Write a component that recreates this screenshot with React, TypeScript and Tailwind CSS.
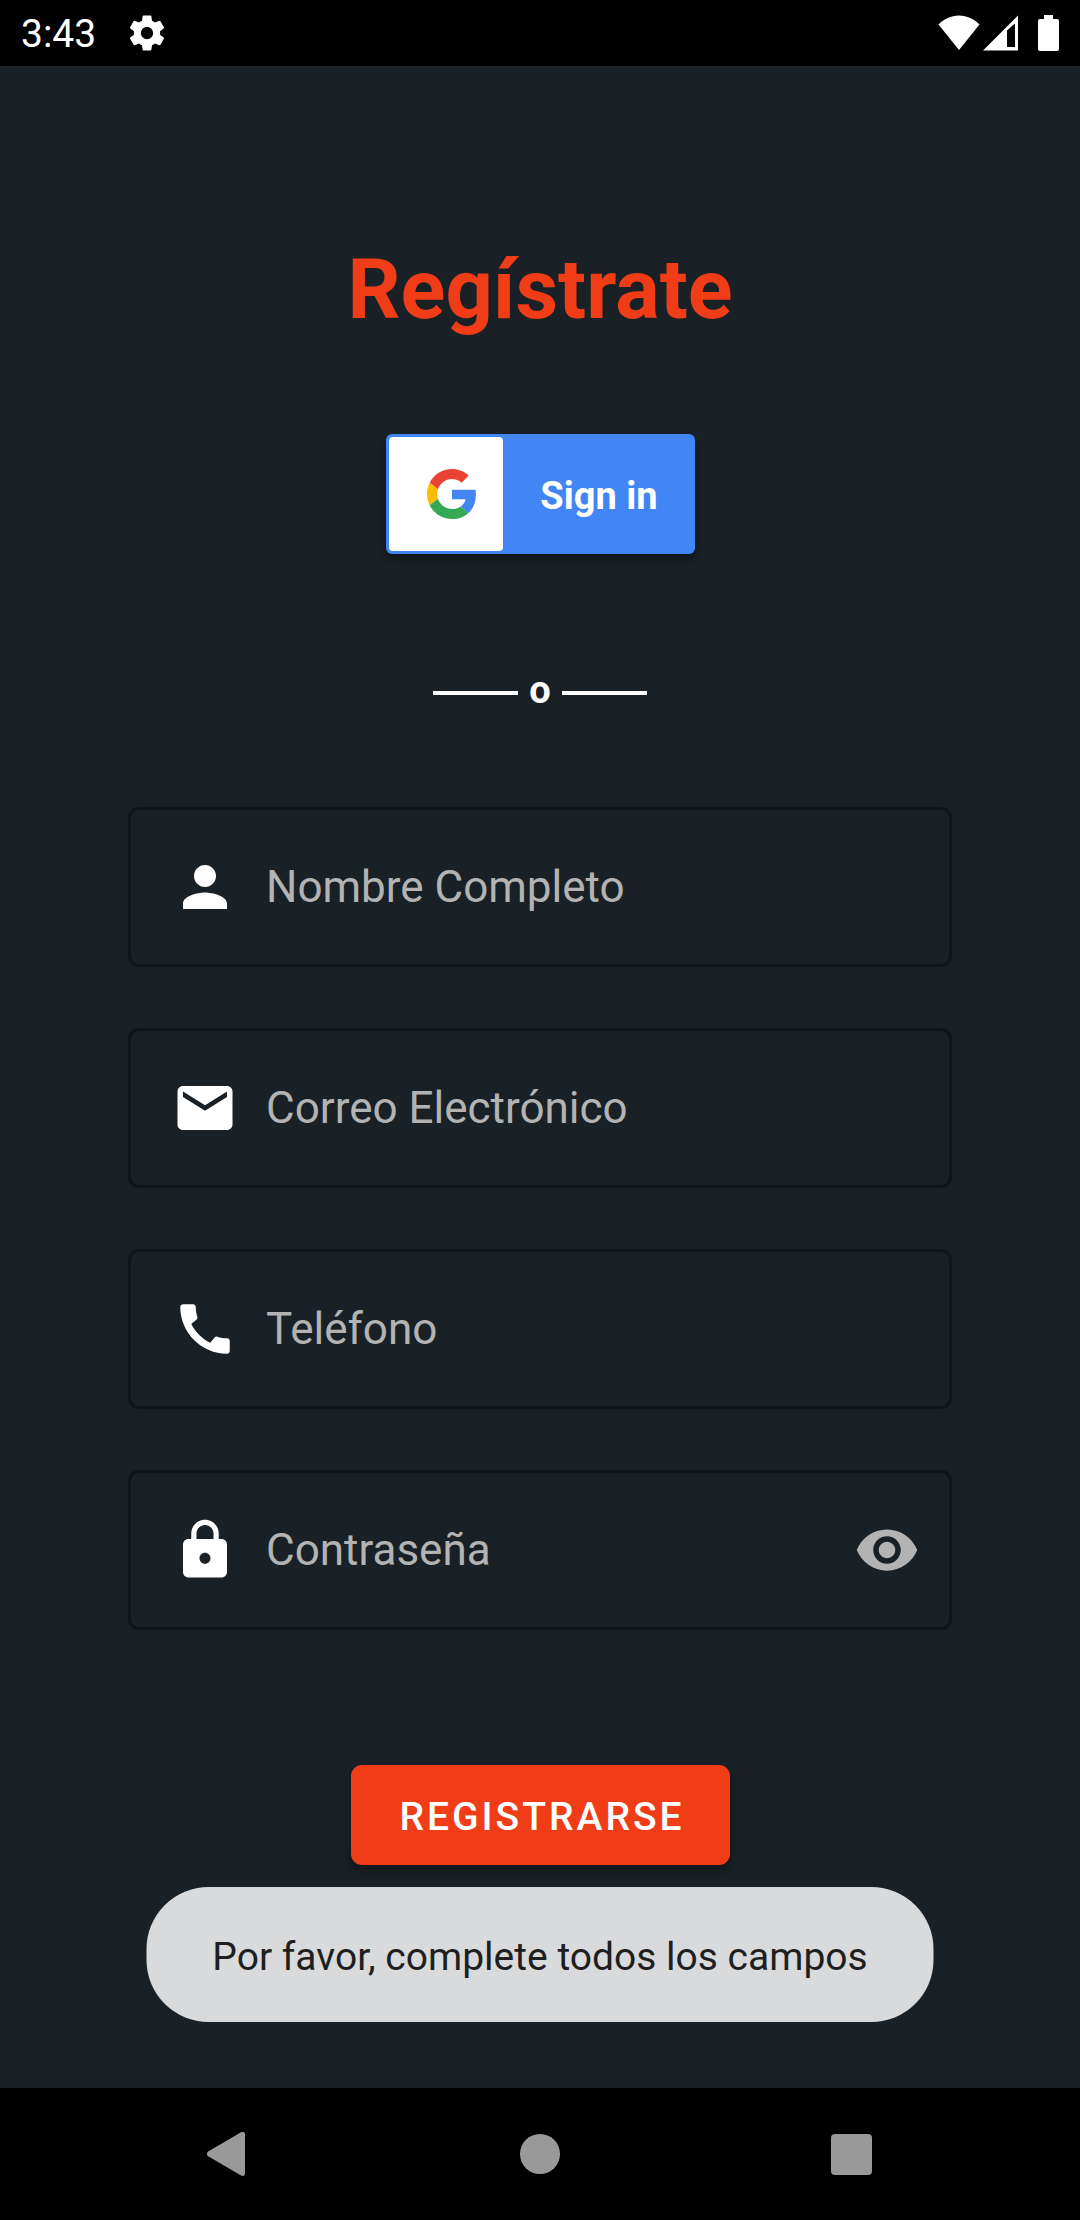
import { useState, type ReactNode } from "react";

function Icon({ children }: { children: ReactNode }) {
  return (
    <svg viewBox="0 0 24 24" className="size-[66px] shrink-0" fill="currentColor" aria-hidden="true">
      {children}
    </svg>
  );
}

function StatusBar() {
  return (
    <header className="flex h-[66px] shrink-0 items-center justify-between bg-black px-[21px] text-white">
      <div className="flex items-center gap-[30px]">
        <span className="pt-[2px] text-[39px] leading-[44px]">3:43</span>
        <svg viewBox="0 0 24 24" className="size-[42px]" fill="currentColor" aria-hidden="true">
          <path d="M19.43 12.98c.04-.32.07-.64.07-.98s-.03-.66-.07-.98l2.11-1.65c.19-.15.24-.42.12-.64l-2-3.46c-.12-.22-.39-.3-.61-.22l-2.49 1c-.52-.4-1.08-.73-1.69-.98l-.38-2.65C14.46 2.18 14.25 2 14 2h-4c-.25 0-.46.18-.49.42l-.38 2.65c-.61.25-1.17.59-1.69.98l-2.49-1c-.23-.09-.49 0-.61.22l-2 3.46c-.13.22-.07.49.12.64l2.11 1.65c-.04.32-.07.65-.07.98s.03.66.07.98l-2.11 1.65c-.19.15-.24.42-.12.64l2 3.46c.12.22.39.3.61.22l2.49-1c.52.4 1.08.73 1.69.98l.38 2.65c.03.24.24.42.49.42h4c.25 0 .46-.18.49-.42l.38-2.65c.61-.25 1.17-.59 1.69-.98l2.49 1c.23.09.49 0 .61-.22l2-3.46c.12-.22.07-.49-.12-.64l-2.11-1.65zM12 15.5c-1.93 0-3.5-1.57-3.5-3.5s1.57-3.5 3.5-3.5 3.5 1.57 3.5 3.5-1.57 3.5-3.5 3.5z" />
        </svg>
      </div>
      <div className="flex items-center">
        <svg viewBox="0 0 42 36" className="mr-[3px] h-[36px] w-[42px]" fill="currentColor" aria-hidden="true">
          <path d="M21 35 0.5 9.5C6 4 13 0.5 21 0.5S36 4 41.500 9.500Z" />
        </svg>
        <svg viewBox="0 0 35 36" className="mr-[20px] h-[36px] w-[35px]" fill="currentColor" fillRule="evenodd" aria-hidden="true">
          <path d="M0 35.500 35 0.500V35.500ZM24 15.500V32H32V8.500Z" />
        </svg>
        <svg viewBox="0 0 21 36" className="h-[36px] w-[21px]" fill="currentColor" aria-hidden="true">
          <path d="M6 0h9v4h4a2 2 0 0 1 2 2v28a2 2 0 0 1-2 2H2a2 2 0 0 1-2-2V6a2 2 0 0 1 2-2h4Z" />
        </svg>
      </div>
    </header>
  );
}

function GoogleLogo() {
  return (
    <svg viewBox="0 0 48 48" className="size-[50px]" aria-hidden="true">
      <path fill="#EA4335" d="M24 9.500c3.540 0 6.710 1.220 9.210 3.600l6.850-6.850C35.900 2.380 30.470 0 24 0 14.620 0 6.510 5.380 2.560 13.220l7.980 6.190C12.430 13.720 17.740 9.500 24 9.500z" />
      <path fill="#4285F4" d="M46.980 24.550c0-1.570-.15-3.090-.38-4.550H24v9.020h12.940c-.58 2.960-2.260 5.480-4.780 7.180l7.730 6c4.510-4.180 7.090-10.360 7.090-17.650z" />
      <path fill="#FBBC05" d="M10.530 28.590c-.48-1.450-.76-2.990-.76-4.590s.27-3.140.76-4.590l-7.980-6.190C.92 16.460 0 20.120 0 24c0 3.880.92 7.540 2.560 10.780l7.970-6.190z" />
      <path fill="#34A853" d="M24 48c6.480 0 11.930-2.130 15.890-5.810l-7.730-6c-2.150 1.450-4.920 2.300-8.160 2.300-6.260 0-11.570-4.220-13.470-9.910l-7.980 6.190C6.510 42.620 14.620 48 24 48z" />
    </svg>
  );
}

type FieldProps = {
  id: string;
  label: string;
  type: string;
  icon: ReactNode;
  trailing?: ReactNode;
};

function Field({ id, label, type, icon, trailing }: FieldProps) {
  return (
    <div className="flex h-[160px] items-center rounded-[11px] border-[3px] border-[#0f1518] pl-[41px] pr-[29px] text-white">
      <label htmlFor={id} className="shrink-0">
        <Icon>{icon}</Icon>
      </label>
      <input
        id={id}
        type={type}
        aria-label={label}
        placeholder={label}
        className="h-full min-w-0 flex-1 bg-transparent pl-[28px] text-[44px] text-white outline-none placeholder:text-[#b3b3b3]"
      />
      {trailing}
    </div>
  );
}

function NavigationBar() {
  return (
    <nav className="flex h-[132px] shrink-0 items-center justify-center gap-[270px] bg-black text-[#999999]">
      <button type="button" aria-label="Atrás">
        <svg viewBox="0 0 42 46" className="h-[46px] w-[42px]" fill="currentColor" aria-hidden="true">
          <path d="M1.200 20.600 34 1.300Q38 -0.500 38 4V42Q38 46 34 44.500L1.200 25.200Q-1.500 23 1.200 20.600Z" />
        </svg>
      </button>
      <button type="button" aria-label="Inicio">
        <svg viewBox="0 0 42 42" className="size-[42px]" fill="currentColor" aria-hidden="true">
          <circle cx="21" cy="21" r="20" />
        </svg>
      </button>
      <button type="button" aria-label="Recientes">
        <svg viewBox="0 0 42 42" className="size-[42px]" fill="currentColor" aria-hidden="true">
          <rect x="0" y="1" width="41" height="41" rx="4" />
        </svg>
      </button>
    </nav>
  );
}

export default function App() {
  const [visible, setVisible] = useState(false);

  return (
    <div className="flex min-h-screen flex-col bg-[#192126] font-['Roboto',sans-serif]">
      <StatusBar />
      <main className="relative flex flex-1 flex-col items-center px-6 pt-[176px] pb-[66px]">
        <h1 className="text-[83px] leading-[96px] font-bold text-[#f03c17]">Regístrate</h1>

        <button
          type="button"
          className="mt-[96px] flex h-[120px] w-[309px] items-center rounded-[6px] bg-[#4285f4] p-[3px] shadow-[0_4px_6px_rgba(0,0,0,0.45)]"
        >
          <span className="flex size-[114px] shrink-0 items-center justify-center rounded-[4px] bg-white pl-3">
            <GoogleLogo />
          </span>
          <span className="flex-1 pt-[4px] pl-[4px] text-center text-[38px] leading-[44px] font-bold text-white">
            Sign in
          </span>
        </button>

        <div className="mt-[114px] flex items-center gap-[11px] text-white">
          <span className="h-[4px] w-[85px] bg-white" />
          <span className="pb-[6px] text-[38px] leading-[44px] font-bold">o</span>
          <span className="h-[4px] w-[85px] bg-white" />
        </div>

        <form
          className="mt-[89px] flex w-full max-w-[824px] flex-col items-center"
          onSubmit={(event) => event.preventDefault()}
        >
          <div className="flex w-full flex-col gap-[61px]">
            <Field
              id="nombre"
              label="Nombre Completo"
              type="text"
              icon={<path d="M12 12c2.210 0 4-1.790 4-4s-1.790-4-4-4-4 1.790-4 4 1.790 4 4 4zm0 2c-2.670 0-8 1.340-8 4v2h16v-2c0-2.660-5.330-4-8-4z" />}
            />
            <Field
              id="correo"
              label="Correo Electrónico"
              type="email"
              icon={<path d="M20 4H4c-1.100 0-1.990.9-1.990 2L2 18c0 1.100.9 2 2 2h16c1.100 0 2-.9 2-2V6c0-1.100-.9-2-2-2zm0 4l-8 5-8-5V6l8 5 8-5v2z" />}
            />
            <Field
              id="telefono"
              label="Teléfono"
              type="tel"
              icon={<path d="M20.010 15.380c-1.230 0-2.420-.2-3.530-.56-.35-.12-.74-.03-1.010.24l-1.570 1.970c-2.830-1.350-5.480-3.900-6.890-6.830l1.950-1.660c.27-.28.35-.67.24-1.020-.37-1.110-.56-2.300-.56-3.530 0-.54-.45-.99-.99-.99H4.190C3.650 3 3 3.240 3 3.990 3 13.280 10.730 21 20.010 21c.71 0 .99-.63.99-1.180v-3.450c0-.54-.45-.99-.99-.99z" />}
            />
            <Field
              id="contrasena"
              label="Contraseña"
              type={visible ? "text" : "password"}
              icon={<path d="M18 8h-1V6c0-2.760-2.240-5-5-5S7 3.240 7 6v2H6c-1.100 0-2 .9-2 2v10c0 1.100.9 2 2 2h12c1.100 0 2-.9 2-2V10c0-1.100-.9-2-2-2zm-6 9c-1.100 0-2-.9-2-2s.9-2 2-2 2 .9 2 2-.9 2-2 2zm3.100-9H8.900V6c0-1.710 1.390-3.100 3.100-3.100 1.710 0 3.100 1.390 3.100 3.100v2z" />}
              trailing={
                <button
                  type="button"
                  aria-label="Mostrar contraseña"
                  aria-pressed={visible}
                  onClick={() => setVisible(!visible)}
                  className="text-[#b3b3b3]"
                >
                  <Icon>
                    <path d="M12 4.500C7 4.500 2.730 7.610 1 12c1.730 4.390 6 7.500 11 7.500s9.270-3.110 11-7.500c-1.730-4.390-6-7.500-11-7.500zM12 17c-2.760 0-5-2.240-5-5s2.240-5 5-5 5 2.240 5 5-2.240 5-5 5zm0-8c-1.660 0-3 1.340-3 3s1.340 3 3 3 3-1.340 3-3-1.340-3-3-3z" />
                  </Icon>
                </button>
              }
            />
          </div>

          <button
            type="submit"
            className="mt-[135px] h-[100px] w-[379px] rounded-[11px] bg-[#f03c17] pt-[4px] pl-[4px] text-[39px] leading-[44px] font-medium tracking-[3px] text-white shadow-[0_4px_8px_rgba(0,0,0,0.4)]"
          >
            REGISTRARSE
          </button>
        </form>

        <div
          role="status"
          className="absolute bottom-[66px] left-1/2 flex h-[135px] w-[787px] -translate-x-1/2 items-center justify-center rounded-[62px] bg-[#d9dadc] pt-[4px] text-[39px] leading-[44px] whitespace-nowrap text-[#1f1f1f]"
        >
          Por favor, complete todos los campos
        </div>
      </main>
      <NavigationBar />
    </div>
  );
}
